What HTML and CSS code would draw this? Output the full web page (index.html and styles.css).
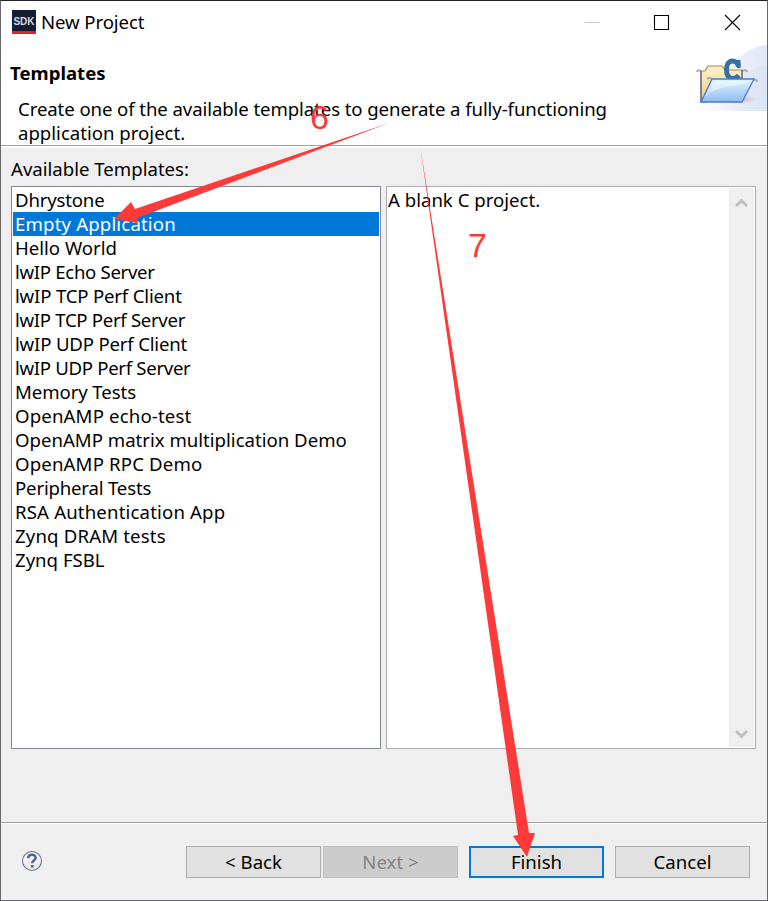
FILE: index.html
```html
<!DOCTYPE html>
<html lang="en">
<head>
<meta charset="utf-8">
<title>New Project</title>
<link rel="stylesheet" href="styles.css">
</head>
<body>
<main class="window">
  <header class="titlebar">
    <span class="app-icon">SDK</span>
    <span class="window-title">New Project</span>
    <svg class="controls" width="160" height="20" viewBox="0 0 160 20" fill="none">
      <path d="M1 10.500h15" stroke="#ccc"/>
      <path d="M70.500 3.500h14v14h-14z" stroke="#000" stroke-width="1.100"/>
      <path d="M141 3l15 15M156 3l-15 15" stroke="#000" stroke-width="1.100"/>
    </svg>
  </header>
  <section class="banner">
    <div class="banner-text">
      <h1>Templates</h1>
      <p><span class="snug">Create one of the available templates to generate a fully-functioning</span><br>application project.</p>
    </div>
    <svg class="banner-art" width="76" height="66" viewBox="0 0 76 66">
      <defs>
        <linearGradient id="sky" x1="0" x2="1"><stop offset="0" stop-color="#fff"/><stop offset=".55" stop-color="#edf1fb"/><stop offset="1" stop-color="#e0e7f7"/></linearGradient>
        <linearGradient id="glow" x1="0" x2="1"><stop offset="0" stop-color="#d7e0f4" stop-opacity="0"/><stop offset="1" stop-color="#d7e0f4"/></linearGradient>
        <linearGradient id="back" x1="0" y1="0" x2="0" y2="1"><stop offset="0" stop-color="#fcf2d0"/><stop offset="1" stop-color="#efce79"/></linearGradient>
        <linearGradient id="front" x1="0" y1="0" x2="0" y2="1"><stop offset="0" stop-color="#e2f5ff"/><stop offset="1" stop-color="#8ebcf1"/></linearGradient>
        <radialGradient id="shade"><stop offset="0" stop-color="#a48f9c" stop-opacity=".65"/><stop offset="1" stop-color="#fff" stop-opacity="0"/></radialGradient>
      </defs>
      <path d="M0 66C25 61 31 4 77 0v66z" fill="url(#sky)"/>
      <path d="M32 66C39 35 52 22 77 21v45z" fill="url(#glow)" opacity=".6"/>
      <ellipse cx="50" cy="54" rx="24" ry="7" fill="url(#shade)"/>
      <path d="M6 27q1-3 4-1M51 26q5-2 5 1M61 35q5-1 5 2" fill="none" stroke="#aaa" stroke-width="2"/>
      <path d="M10 57V26h4l3-5h14l3 4h17v29z" fill="url(#back)" stroke="#ad8848" stroke-width="1.200"/>
      <path d="M10 57V26M51 25v10" stroke="#6872a8" stroke-width="1.500"/>
      <path d="M16 34q2-2 5 0" fill="none" stroke="#aaa" stroke-width="2"/>
      <path d="M47.500 21.500C46 14 35.500 13.500 35.500 24.500s8.500 10.500 12.500 6" fill="none" stroke="#376f9f" stroke-width="5"/>
      <path d="M46 15h3.500v8H46z" fill="#376f9f"/>
      <path d="M10 57l11-23h42L51 57z" fill="url(#front)" stroke="#4f78cc" stroke-width="1.300"/>
      <path d="M14 52l8-16h37C48 43 27 39 14 52z" fill="#fff" opacity=".42"/>
    </svg>
  </section>
  <section class="content">
    <label class="list-label">Available Templates:</label>
    <div class="panes">
      <ul class="templates">
        <li class="tight">Dhrystone</li>
        <li class="selected wide">Empty Application</li>
        <li>Hello World</li>
        <li class="tighter">lwIP Echo Server</li>
        <li class="tight">lwIP TCP Perf Client</li>
        <li class="tighter">lwIP TCP Perf Server</li>
        <li class="tight">lwIP UDP Perf Client</li>
        <li class="tighter">lwIP UDP Perf Server</li>
        <li class="snug">Memory Tests</li>
        <li class="wide">OpenAMP echo-test</li>
        <li>OpenAMP matrix multiplication Demo</li>
        <li class="wide">OpenAMP RPC Demo</li>
        <li class="tight">Peripheral Tests</li>
        <li class="wide">RSA Authentication App</li>
        <li class="wide">Zynq DRAM tests</li>
        <li>Zynq FSBL</li>
      </ul>
      <div class="description">
        <p>A blank C project.</p>
        <div class="scrollbar">
          <svg width="13" height="10" viewBox="0 0 13 10"><path d="M1 8l5.500-5.500L12 8" fill="none" stroke="#bfbfbf" stroke-width="3"/></svg>
          <svg width="13" height="10" viewBox="0 0 13 10"><path d="M1 2l5.500 5.500L12 2" fill="none" stroke="#bfbfbf" stroke-width="3"/></svg>
        </div>
      </div>
    </div>
  </section>
  <footer class="footer">
    <svg class="help" width="22" height="22" viewBox="0 0 22 22">
      <defs><linearGradient id="helpfill" x1="0" y1="0" x2="0" y2="1"><stop offset="0" stop-color="#fff"/><stop offset="1" stop-color="#e5e5e5"/></linearGradient></defs>
      <circle cx="11" cy="11" r="9.500" fill="url(#helpfill)" stroke="#64749a" stroke-width="1.100"/>
      <path d="M7.200 8.300C7.200 3.700 14.700 3.800 14.700 7.600c0 2.800-3.500 3-3.500 5.600" fill="none" stroke="#53658d" stroke-width="2.500"/>
      <path d="M9.900 15h2.700v2.500H9.900z" fill="#53658d"/>
    </svg>
    <button class="button">&lt; Back</button>
    <button class="button disabled" disabled>Next &gt;</button>
    <button class="button primary">Finish</button>
    <button class="button cancel">Cancel</button>
  </footer>
</main>
<svg class="annotations" width="768" height="901" viewBox="0 0 768 901">
  <path d="M389 123L137 218l1 5-24-4 17-17 4 7z" fill="#fc3a39"/>
  <path d="M420 145L529 833l6 0-8 24-14-21 5-1z" fill="#fc3a39"/>
  <text x="310" y="129">6</text>
  <text x="468" y="257">7</text>
</svg>
</body>
</html>
```

FILE: styles.css
```css
* { box-sizing: border-box; }
body { margin: 0; font-family: "Noto Sans", sans-serif; font-size: 18.6px; line-height: 24px; color: #000; }
.window { display: flex; flex-direction: column; width: 768px; height: 901px; background: #efefef; border: 1px solid #69696b; border-top-color: #24232b; }
.titlebar { display: flex; align-items: center; height: 43px; padding-left: 11px; background: #fff; flex: none; }
.app-icon { width: 24px; height: 24px; margin-top: -1px; background: #161c33; border-bottom: 3px solid #ee1c25; color: #d5d7df; font: bold 10px/23px "Liberation Sans", sans-serif; text-align: center; }
.window-title { margin: -2px 0 0 5px; letter-spacing: -.1px; }
.controls { margin: -1px 23px 0 auto; }
.banner { display: flex; justify-content: space-between; height: 102px; background: #fff; border-bottom: 1px solid #a0a0a0; flex: none; }
.banner-text { padding: 17px 0 0 9px; white-space: nowrap; }
h1 { margin: 0; font-size: 18.6px; line-height: 24px; }
.banner p { margin: 12px 0 0 8px; }
.banner-art { display: block; margin-top: 1px; flex: none; }
.snug { letter-spacing: -.09px; }
.tight { letter-spacing: -.18px; }
.tighter { letter-spacing: -.31px; }
.wide { letter-spacing: .16px; }
.content { display: flex; flex-direction: column; height: 676px; padding: 9px 11px 0 10px; border-top: 2px solid #fff; flex: none; }
.list-label { height: 29px; }
.panes { display: flex; gap: 5px; height: 563px; }
.templates { width: 370px; margin: 0; padding: 1px; list-style: none; background: #fff; border: 1px solid #828790; }
.templates li { height: 24px; padding-left: 2px; white-space: nowrap; }
.templates .selected { background: #0078d7; color: #fff; }
.description { display: flex; justify-content: space-between; width: 370px; padding: 1px; background: #fff; border: 1px solid #abadb3; }
.description p { margin: 0; }
.scrollbar { display: flex; flex-direction: column; justify-content: space-between; align-items: center; width: 25px; padding: 10px 0 8px; background: #efefef; }
.footer { display: flex; align-items: flex-start; height: 78px; padding: 23px 17px 0 20px; border-top: 1px solid #a0a0a0; box-shadow: inset 0 1px #fff; flex: none; }
.help { margin: 4px auto 0 0; }
.button { width: 135px; height: 32px; padding: 0; border: 1px solid #adadad; background: #e1e1e1; color: #000; font: inherit; }
.button + .button { margin-left: 2px; }
.button.disabled { background: #ccc; border-color: #bfbfbf; color: #838383; }
.button.primary { border: 2px solid #0078d7; margin-left: 11px; }
.button.cancel { margin-left: 11px; }
.annotations { position: absolute; inset: 0; pointer-events: none; }
.annotations text { font: 34px "Liberation Sans", sans-serif; fill: #fc3a39; }
```
